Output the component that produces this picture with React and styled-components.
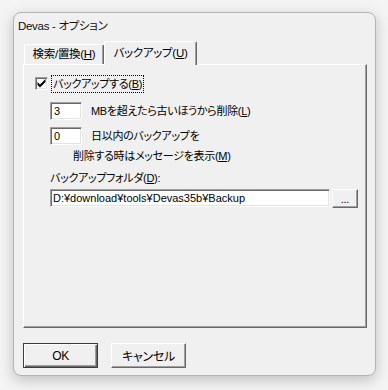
import React, { useState } from "react";
import styled, { createGlobalStyle } from "styled-components";

const GlobalStyle = createGlobalStyle`
  html, body {
    margin: 0;
    padding: 0;
    background: #f4f4f4;
  }
  body {
    font-family: "Liberation Sans", "Noto Sans CJK JP", sans-serif;
    font-size: 11px;
    letter-spacing: -0.3px;
    font-feature-settings: "palt";
    color: #000;
  }
  input, button {
    font-feature-settings: "palt";
    letter-spacing: -0.3px;
  }
`;

const App = () => {
  const [backup, setBackup] = useState(true);
  const [size, setSize] = useState("3");
  const [days, setDays] = useState("0");
  const [folder, setFolder] = useState("D:¥download¥tools¥Devas35b¥Backup");

  return (
    <>
      <GlobalStyle />
      <Stage>
        <Window>
          <TitleBar>Devas - オプション</TitleBar>
          <Body>
            <TabStrip>
              <Tab width={80}>
                検索/置換(<u>H</u>)
              </Tab>
              <Tab active width={93}>
                バックアップ(<u>U</u>)
              </Tab>
            </TabStrip>
            <Panel>
              <CheckRow onClick={() => setBackup(!backup)}>
                <CheckBox>{backup && <CheckMark />}</CheckBox>
                <FocusLabel>
                  バックアップする(<u>B</u>)
                </FocusLabel>
              </CheckRow>
              <FieldRow>
                <SmallInput value={size} onChange={(e) => setSize(e.target.value)} />
                <Label>
                  MBを超えたら古いほうから削除(<u>L</u>)
                </Label>
              </FieldRow>
              <FieldRow second>
                <SmallInput value={days} onChange={(e) => setDays(e.target.value)} />
                <Label>日以内のバックアップを</Label>
              </FieldRow>
              <SubLabel>
                削除する時はメッセージを表示(<u>M</u>)
              </SubLabel>
              <FolderLabel>
                バックアップフォルダ(<u>D</u>):
              </FolderLabel>
              <FolderRow>
                <PathInput value={folder} onChange={(e) => setFolder(e.target.value)} />
                <BrowseButton>...</BrowseButton>
              </FolderRow>
            </Panel>
            <ButtonRow>
              <DialogButton isDefault>OK</DialogButton>
              <DialogButton>キャンセル</DialogButton>
            </ButtonRow>
          </Body>
        </Window>
      </Stage>
    </>
  );
};

const CheckMark = () => (
  <svg width="9" height="9" viewBox="0 0 9 9">
    <path d="M0.5 3 L3 5.5 L8.5 0 L8.5 3 L3 8.5 L0.5 6 Z" fill="#000" />
  </svg>
);

const Stage = styled.div`
  width: 388px;
  height: 390px;
  padding: 12px 0 0 13px;
  box-sizing: border-box;
`;

const Window = styled.div`
  width: 363px;
  height: 364px;
  box-sizing: border-box;
  background: #f0f0f0;
  border: 1px solid #b4b4b4;
  border-radius: 8px;
  box-shadow: 0 4px 14px rgba(0, 0, 0, 0.22);
  display: flex;
  flex-direction: column;
`;

const TitleBar = styled.div`
  height: 27px;
  padding: 5px 0 0 4px;
  box-sizing: border-box;
  font-size: 11.5px;
  line-height: 16px;
  color: #111;
`;

const Body = styled.div`
  padding: 1px 0 0 9px;
  display: flex;
  flex-direction: column;
`;

const TabStrip = styled.div`
  display: flex;
  align-items: flex-end;
  height: 23px;
  padding-left: 1px;
  position: relative;
  z-index: 1;
`;

const Tab = styled.div`
  box-sizing: border-box;
  width: ${({ width }) => width}px;
  height: ${({ active }) => (active ? "24px" : "20px")};
  margin-bottom: ${({ active }) => (active ? "-1px" : "0")};
  padding-top: ${({ active }) => (active ? "3px" : "1px")};
  text-align: center;
  font-size: 11.5px;
  background: #f0f0f0;
  border-top: 1px solid #fff;
  border-left: 1px solid #fff;
  border-right: 1px solid #696969;
  box-shadow: inset -1px 0 0 #a0a0a0;
  border-radius: 2px 2px 0 0;
  line-height: 17px;
  white-space: nowrap;
  u {
    text-underline-offset: 1px;
  }
`;

const Panel = styled.div`
  box-sizing: border-box;
  width: 344px;
  height: 264px;
  background: #f0f0f0;
  border-top: 1px solid #fff;
  border-left: 1px solid #fff;
  border-right: 1px solid #696969;
  border-bottom: 1px solid #696969;
  box-shadow: inset -1px -1px 0 #a0a0a0;
  padding: 10px 0 0 11px;
  display: flex;
  flex-direction: column;
`;

const CheckRow = styled.div`
  display: flex;
  align-items: center;
  height: 17px;
  cursor: default;
`;

const CheckBox = styled.div`
  box-sizing: border-box;
  width: 13px;
  height: 13px;
  background: #fff;
  border-top: 1px solid #a0a0a0;
  border-left: 1px solid #a0a0a0;
  border-right: 1px solid #fff;
  border-bottom: 1px solid #fff;
  box-shadow: inset 1px 1px 0 #696969, inset -1px -1px 0 #e3e3e3;
  display: flex;
  align-items: center;
  justify-content: center;
  margin-right: 4px;
`;

const FocusLabel = styled.span`
  outline: 1px dotted #000;
  outline-offset: 0;
  padding: 0 1px;
  line-height: 16px;
`;

const FieldRow = styled.div`
  display: flex;
  align-items: center;
  margin: ${({ second }) => (second ? "7px 0 0 15px" : "10px 0 0 15px")};
`;

const SmallInput = styled.input`
  box-sizing: border-box;
  width: 32px;
  height: 18px;
  padding: 0 0 0 3px;
  font: inherit;
  background: #fff;
  border-top: 1px solid #a0a0a0;
  border-left: 1px solid #a0a0a0;
  border-right: 1px solid #fff;
  border-bottom: 1px solid #fff;
  box-shadow: inset 1px 1px 0 #696969, inset -1px -1px 0 #e3e3e3;
  outline: none;
`;

const Label = styled.span`
  margin-left: 9px;
  line-height: 16px;
  white-space: nowrap;
`;

const SubLabel = styled.div`
  margin: 3px 0 0 38px;
  line-height: 16px;
`;

const FolderLabel = styled.div`
  margin: 6px 0 0 15px;
  line-height: 16px;
`;

const FolderRow = styled.div`
  display: flex;
  margin: 3px 0 0 15px;
  gap: 2px;
`;

const PathInput = styled(SmallInput)`
  width: 280px;
  padding-left: 2px;
  letter-spacing: 0;
`;

const RaisedButton = styled.button`
  box-sizing: border-box;
  background: #f0f0f0;
  font: inherit;
  color: #000;
  border-top: 1px solid #fff;
  border-left: 1px solid #fff;
  border-right: 1px solid #696969;
  border-bottom: 1px solid #696969;
  box-shadow: inset -1px -1px 0 #a0a0a0;
  padding: 0;
  cursor: default;
`;

const BrowseButton = styled(RaisedButton)`
  width: 26px;
  height: 19px;
  line-height: 14px;
`;

const ButtonRow = styled.div`
  display: flex;
  gap: 13px;
  margin-top: 15px;
`;

const DialogButton = styled(RaisedButton)`
  width: 75px;
  height: 25px;
  font-size: 12px;
  ${({ isDefault }) =>
    isDefault &&
    `
    border: 1px solid #3c3c3c;
    box-shadow: inset 1px 1px 0 #fff, inset -1px -1px 0 #696969, inset -2px -2px 0 #a0a0a0;
  `}
`;

export default App;
